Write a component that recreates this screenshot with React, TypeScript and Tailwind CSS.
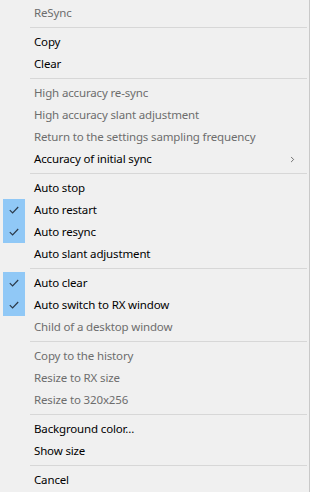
import { ChevronRight } from 'lucide-react'

type Item =
  | { kind: 'sep' }
  | { kind: 'item'; label: string; disabled?: boolean; checked?: boolean; submenu?: boolean }

const ITEMS: Item[] = [
  { kind: 'item', label: 'ReSync', disabled: true },
  { kind: 'sep' },
  { kind: 'item', label: 'Copy' },
  { kind: 'item', label: 'Clear' },
  { kind: 'sep' },
  { kind: 'item', label: 'High accuracy re-sync', disabled: true },
  { kind: 'item', label: 'High accuracy slant adjustment', disabled: true },
  { kind: 'item', label: 'Return to the settings sampling frequency', disabled: true },
  { kind: 'item', label: 'Accuracy of initial sync', submenu: true },
  { kind: 'sep' },
  { kind: 'item', label: 'Auto stop' },
  { kind: 'item', label: 'Auto restart', checked: true },
  { kind: 'item', label: 'Auto resync', checked: true },
  { kind: 'item', label: 'Auto slant adjustment' },
  { kind: 'sep' },
  { kind: 'item', label: 'Auto clear', checked: true },
  { kind: 'item', label: 'Auto switch to RX window', checked: true },
  { kind: 'item', label: 'Child of a desktop window', disabled: true },
  { kind: 'sep' },
  { kind: 'item', label: 'Copy to the history', disabled: true },
  { kind: 'item', label: 'Resize to RX size', disabled: true },
  { kind: 'item', label: 'Resize to 320x256', disabled: true },
  { kind: 'sep' },
  { kind: 'item', label: 'Background color...' },
  { kind: 'item', label: 'Show size' },
  { kind: 'sep' },
  { kind: 'item', label: 'Cancel' },
]

function Check() {
  return (
    <svg width="10" height="8" viewBox="0 0 10 8" fill="none">
      <path d="M0.8 4.2 L3.6 7 L9.2 1" stroke="#2b3a4a" strokeWidth="1.2" />
    </svg>
  )
}

export default function App() {
  return (
    <div
      className="w-[310px] h-[492px] bg-[#f0f0f0] border-r border-[#c9c9c9] pt-[2px] text-[11.5px] tracking-[-0.15px] text-black"
      style={{ fontFamily: '"Noto Sans", "Open Sans", sans-serif' }}
    >
      {ITEMS.map((item, i) =>
        item.kind === 'sep' ? (
          <div key={i} className="h-[7px] flex items-center pl-[30px] pr-[2px]">
            <div className="h-px w-full bg-[#d7d7d7]" />
          </div>
        ) : (
          <div key={i} className="h-[22px] flex items-center">
            <div className="w-[34px] h-full pl-[3px]">
              {item.checked && (
                <div className="w-[22px] h-full bg-[#90c8f6] flex items-center justify-center">
                  <Check />
                </div>
              )}
            </div>
            <span className={`flex-1 leading-none ${item.disabled ? 'text-[#6d6d6d]' : ''}`}>
              {item.label}
            </span>
            {item.submenu && (
              <ChevronRight className="w-[9px] h-[9px] mr-[12px] text-[#333]" strokeWidth={1.8} />
            )}
          </div>
        )
      )}
    </div>
  )
}
